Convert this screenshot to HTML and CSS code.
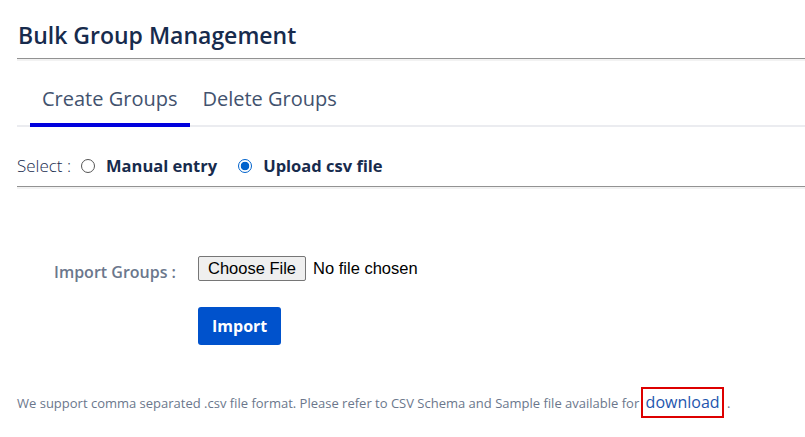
FILE: index.html
```html
<!DOCTYPE html>
<html>
<head>
<meta charset="utf-8">
<link rel="stylesheet" href="styles.css">
</head>
<body>
<div class="page">
  <h1 class="title">Bulk Group Management</h1>
  <div class="rule"></div>
  <div class="tabs">
    <div class="tab active">Create Groups</div>
    <div class="tab">Delete Groups</div>
  </div>
  <div class="select-row">
    <span class="select-label">Select :</span>
    <label class="radio"><span class="dot"></span><span class="radio-text">Manual entry</span></label>
    <label class="radio"><span class="dot checked"></span><span class="radio-text">Upload csv file</span></label>
  </div>
  <div class="rule"></div>
  <div class="form">
    <div class="field">
      <span class="field-label">Import Groups :</span>
      <div class="file">
        <span class="file-btn">Choose File</span>
        <span class="file-text">No file chosen</span>
      </div>
    </div>
    <div class="actions">
      <span class="import-btn">Import</span>
    </div>
  </div>
  <p class="note">We support comma separated .csv file format. Please refer to CSV Schema and Sample file available for <a class="download">download</a> .</p>
</div>
</body>
</html>
```
FILE: styles.css
```css
html, body { margin: 0; padding: 0; background: #fff; }
body { font-family: "Open Sans", "Noto Sans", sans-serif; color: #172b4d; }
.page { padding-left: 17px; }
.title {
  margin: 0;
  padding-top: 19px;
  font-size: 23px;
  font-weight: 600;
  line-height: 32px;
  color: #172b4d;
  padding-left: 1px;
  height: 39px;
}
.rule {
  height: 1px;
  background: #929292;
  border-bottom: 2px solid #f2f2f2;
}
.tabs {
  display: flex;
  padding-left: 13px;
  border-bottom: 2px solid #ebecf0;
  margin-top: 0;
}
.tab {
  font-size: 20px;
  color: #42526e;
  padding: 25px 13px 11px 12px;
  line-height: 26px;
  border-bottom: 4px solid transparent;
  margin-bottom: -2px;
}
.tab.active { border-bottom-color: #0000dd; }
.select-row {
  display: flex;
  align-items: center;
  box-sizing: border-box;
  height: 59px;
  padding-top: 18px;
  font-size: 17px;
}
.select-label { font-weight: 300; color: #172b4d; margin-right: 10px; }
.radio { display: flex; align-items: center; margin-right: 21px; }
.dot {
  width: 12px; height: 12px;
  border: 1px solid #555;
  border-radius: 50%;
  margin-right: 11px;
  box-sizing: content-box;
}
.dot.checked {
  border-color: #0062cc;
  background: radial-gradient(circle, #0062cc 0 4px, #fff 4.6px);
}
.radio-text { font-weight: 700; color: #172b4d; font-size: 16.5px; }
.form { padding: 64px 0 0 37px; }
.field { display: flex; align-items: center; }
.field-label {
  width: 144px;
  font-size: 16px;
  font-weight: 600;
  color: #6b778c;
  padding-top: 8px;
}
.file { display: flex; align-items: center; font-family: "Liberation Sans", Arial, sans-serif; font-size: 16.5px; color: #000; }
.file-btn {
  border: 1px solid #767676;
  border-radius: 2px;
  background: #efefef;
  padding: 2px 9px 2px 9px;
  line-height: 19px;
  margin-right: 7px;
}
.actions { padding: 24px 0 0 144px; }
.import-btn {
  display: inline-block;
  background: #0052cc;
  color: #fff;
  font-weight: 700;
  font-size: 16px;
  border-radius: 3px;
  padding: 0 14px;
  line-height: 38px;
}
.note {
  margin: 42px 0 0 0;
  font-size: 13px;
  color: #6b778c;
}
.download {
  display: inline-block;
  font-size: 16px;
  line-height: 21px;
  color: #1e56ae;
  border: 2px solid #dd0000;
  padding: 3px 2px 3px 3px;
  margin-left: -2px;
}
```
